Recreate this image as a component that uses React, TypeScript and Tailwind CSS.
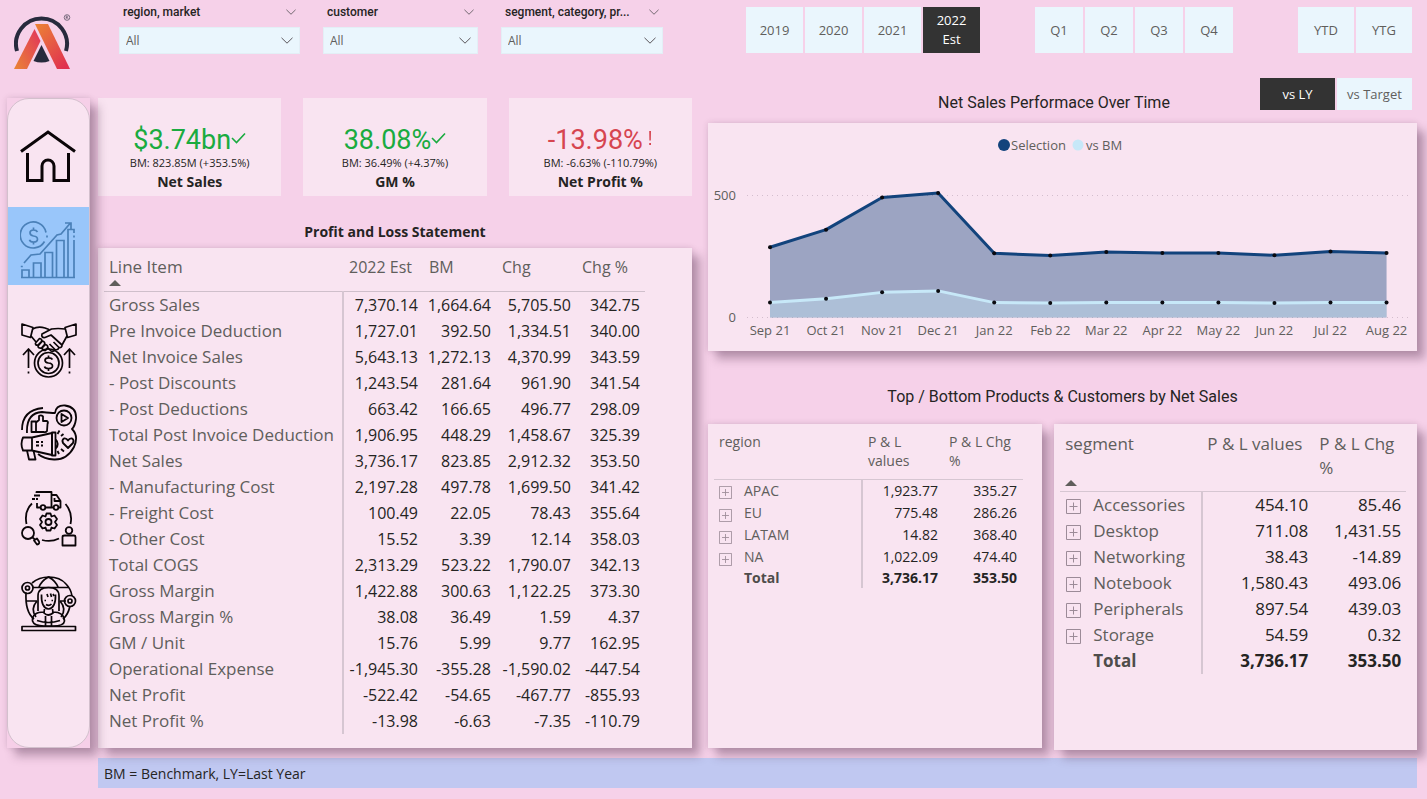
import React from "react";
import { useId } from "react";

const ui = "font-['Open_Sans','Noto_Sans',sans-serif]";
const din = "font-[Roboto,'Liberation_Sans',sans-serif]";
const shadow = "shadow-[0_0_6px_rgba(70,35,65,0.16),8px_8px_9px_rgba(70,35,65,0.34)]";
const panel = "bg-[#f9e4f1] " + shadow;

function Chevron({ className }: { className: string }) {
  return (
    <svg className={className} viewBox="0 0 12 7" fill="none" stroke="#5a555a" aria-hidden="true">
      <path d="M0.5 0.8 L6 6.2 L11.5 0.8" />
    </svg>
  );
}

function Logo() {
  return (
    <svg width="58" height="60" viewBox="0 0 58 60" role="img" aria-label="Logo">
      <defs>
        <linearGradient id="logoLeft" x1="0" y1="1" x2="1" y2="0.2">
          <stop offset="0" stopColor="#ea8534" />
          <stop offset="1" stopColor="#e23a58" />
        </linearGradient>
        <linearGradient id="logoRight" x1="0" y1="0" x2="0.8" y2="1">
          <stop offset="0" stopColor="#ec8433" />
          <stop offset="0.5" stopColor="#e65a45" />
          <stop offset="1" stopColor="#e0304f" />
        </linearGradient>
      </defs>
      <path d="M3 39 A25.5 25.5 0 1 1 52 39" fill="none" stroke="#272a3d" strokeWidth="4" />
      <path d="M27.5 33 L35.5 49 Q27.5 52 19.500 49 Z" fill="#272a3d" />
      <path d="M0 57 L20.500 17 L26.500 29 L13 57 Z" fill="url(#logoLeft)" />
      <path d="M21 12 H34 L56 57 H43 Z" fill="url(#logoRight)" />
      <circle cx="53" cy="5.500" r="2.800" fill="none" stroke="#4b4658" strokeWidth="0.7" />
      <path d="M52.200 7 V4 H53.300 Q54.300 4.800 53.300 5.500 H52.200 M53.300 5.500 L54.200 7" fill="none" stroke="#4b4658" strokeWidth="0.6" />
    </svg>
  );
}

function HomeIcon() {
  return (
    <svg width="58" height="54" viewBox="0 0 58 54" fill="none" stroke="#0b0508" strokeWidth="3" strokeLinecap="square">
      <path d="M1 21.500 L28 2 L55 21.500" strokeLinecap="butt" />
      <path d="M7.500 24.500 V50.500 H22 V36 A6 6 0 0 1 34 36 V50.500 H48.500 V24.500" />
    </svg>
  );
}

function GrowthIcon() {
  return (
    <svg width="58" height="60" viewBox="1 0 58 60" fill="none" stroke="#4a80b8" strokeWidth="1.7">
      <path d="M2 57.500 H56" />
      <path d="M3 57 V50 H10 V57 M14.500 57 V43 H22 V57 M26 57 V32.500 H33.500 V57 M37.500 57 V20.500 H45 V57 M49 57 V9.500 H55 V13 M55 20 V57" />
      <path d="M55 15.500 V17.500 M1.800 46.500 H3.800" />
      <path d="M5 43 L12 35 L21 34 L38 15 L42 14 L51 3.500 M46 3 H52 V9" />
      <path d="M25.500 21.500 A13 13 0 1 1 27 12.500" />
      <path d="M18.500 12 Q17.500 10 14.500 10 Q11 10 11 12.800 Q11 15.500 14.500 16 Q18.500 16.300 18.500 19.200 Q18.500 22 14.500 22 Q11 22 10.500 19.800 M14.500 7.500 V10 M14.500 22 V24.500" />
      <path d="M28 15.500 V17.500" />
    </svg>
  );
}

function DealIcon() {
  return (
    <svg width="58" height="58" viewBox="0 0 58 58" fill="none" stroke="#0b0508" strokeWidth="1.700" strokeLinejoin="round">
      <path d="M2 3 L13 6.500 L10.500 16.500 L2 14 Z M56 3 L45 6.500 L47.500 16.500 L56 14 Z" />
      <path d="M12.500 8 Q18 5 25 7 L29 8.500 M45 8 Q38 7 31.500 8 L22 13 Q21 17 25 16.500 L31 14 L42 24" />
      <path d="M11 15 L16 21 M47 15 L42 24 Q42 27 39 26.500 M39 26.500 L33.500 21 M39 26.500 Q38 29.500 35 28.500 M35 28.500 L29.500 23 M35 28.500 Q34 31 31 30 L27.500 26.500" />
      <path d="M15.500 22 L19.500 17.500 Q22.500 18 21.500 20.500 L18 24 Q15 24.500 15.500 22 M18 25 L22.500 20 Q25.500 21 24.500 23.500 L21.500 27 Q18 27.500 18 25 M22 27 L25.500 23.500 Q28.500 24.500 27.500 27 L25.500 29.500 Q22.500 29.500 22 27" />
      <circle cx="28.500" cy="42" r="14" />
      <circle cx="28.500" cy="42" r="10.500" />
      <path d="M32.500 38.500 Q31.500 36.800 28.500 36.800 Q25 36.800 25 39.300 Q25 41.600 28.500 42 Q32.500 42.300 32.500 45 Q32.500 47.500 28.500 47.500 Q25 47.500 24.500 45.500 M28.500 34.500 V36.800 M28.500 47.500 V50" />
      <path d="M8.500 47 V28 M3 34 L8.500 28 L14 34 M49.500 47 V28 M44 34 L49.500 28 L55 34 M8.500 50.500 V52.500 M49.500 50.500 V52.500" />
    </svg>
  );
}

function MarketingIcon() {
  return (
    <svg width="58" height="58" viewBox="0 0 58 58" fill="none" stroke="#0b0508" strokeWidth="1.800" strokeLinejoin="round">
      <path d="M2 26 Q2 6 23 4" />
      <path d="M7 29 Q6 9 22 8 Q31 9 35 9 Q36 1 45 1.500 Q57 3 56 15 Q55 22 52 25 Q59 32 54 43 Q47 56 34 55.500 Q24 55 18 50" />
      <circle cx="44" cy="14" r="7.500" />
      <path d="M41.500 10 L48 14 L41.500 18 Z" />
      <path d="M11.500 17.500 H16 V28 H11.500 Z M16 18.500 L19 16 V12 Q21 10.500 23 12.500 V17 H27 Q28.500 18 27.500 20 L27 27 Q26 28.500 24 28 H16" />
      <path d="M3 33.500 H12 V46.500 H3 Q0 40 3 33.500 Z M12 33.500 L32 29 V51 L12 46.500 M16 38 H19 M16 41.500 H19 M21 38 H23 M21 41.500 H23" />
      <path d="M32 28.500 H35.500 V51.500 H32 Z M35.500 35 Q40 40 35.500 45 M7 46.500 L9 55.500 H15.500 L13.500 46.500" />
      <path d="M48 44 L43 39 Q41.500 36 44 34.500 Q46.500 34 48 36.500 Q49.500 34 52 34.500 Q54.500 36 53 39 Z" />
      <path d="M37.500 30 L39.500 26.500 M41 32 L43.500 30 M37.500 47 L39 50 M41 45 L44 47.500" />
    </svg>
  );
}

function SupplyIcon() {
  return (
    <svg width="58" height="58" viewBox="0 0 58 58" fill="none" stroke="#0b0508" strokeWidth="1.800" strokeLinejoin="round">
      <path d="M16.500 3 V2 H31.500 V17.500 H26 M20 17.500 H17 V13 M31.500 5 H36.500 L40.500 11 V17.500 H38 M32 17.500 H34 M34.500 8 V11 H40 M14 5.500 H20 M12 9 H15 M16 9 H18" />
      <circle cx="23" cy="17.500" r="2.300" />
      <circle cx="36" cy="17.500" r="2.300" />
      <path d="M12 13.500 Q4 21 6.500 34 M45.500 14 Q53 23 50.500 34 M22 50 Q31 52.500 39 48.500" />
      <circle cx="28.500" cy="32" r="3" />
      <path d="M26.500 23.500 H30.500 L31.500 26.500 L34.500 25.500 L37 29 L35 32 L37 35 L34.500 38.500 L31.500 37.500 L30.500 40.500 H26.500 L25.500 37.500 L22.500 38.500 L20 35 L22 32 L20 29 L22.500 25.500 L25.500 26.500 Z" />
      <circle cx="8" cy="43" r="6" />
      <path d="M12.500 47.500 L15 49.500 M14 50.500 L17 48.500 L19 51.500 Q20 54 17 54.500 Z" />
      <circle cx="49" cy="40.500" r="3.300" />
      <path d="M42.500 55.500 V47 Q42.500 45.500 44.500 45.500 H54 Q55.500 45.500 55.500 47 V55.500 Z" />
    </svg>
  );
}

function ExecutiveIcon() {
  return (
    <svg width="58" height="58" viewBox="0 0 58 58" fill="none" stroke="#0b0508" strokeWidth="1.700" strokeLinejoin="round">
      <path d="M12 8 Q19 2 29 2 Q40 2 46 9 Q51 14 52 21 M6 17.500 Q5 37 14 44 M50 31 Q48 40 43 44 M13 12.500 H49 M6 26 H17 M40 26 H46 M28.500 2 Q21 6 18.500 13 M28.500 2 Q36 6 38.500 13 M17 26 Q10 34 16 42 M40 26 Q47 34 41 42" />
      <circle cx="7.500" cy="13" r="5.500" />
      <circle cx="7.500" cy="13" r="2" />
      <circle cx="50" cy="26" r="5.500" />
      <circle cx="50" cy="26" r="2" />
      <path d="M18 36 V21 Q18 12.500 28.500 12.500 Q39 12.500 39 21 V36 M21.500 19.500 Q21 33 28.500 34 Q36 33 35.500 19.500 M27 19 L28 22 M30.500 18.500 L31.500 22 M34 21 L33 19" />
      <path d="M24.500 25.500 H26 M31.500 25.500 H33 M26 29.500 Q29 31.500 31.500 29" />
      <path d="M24.500 34 L24 38 Q28 42 33 38 L32.500 34 M24 37 Q12 37 12.500 46 Q14 51 24 51 H33 Q44 51 44.500 46 Q44 37 33 37 M17 45.500 Q23 47.500 28.500 47.500 Q34 47.500 40 45.500 M25.500 41 V51 M31.500 41 V51" />
      <path d="M2 51.500 H55.500 V55.500 H2 Z" />
    </svg>
  );
}

function Filter({ label, width }: { label: string; width: string }) {
  const id = useId();
  return (
    <div className={"relative " + width}>
      <div className="flex h-[27px] items-center justify-between pr-1 pb-1 pl-1">
        <label htmlFor={id} className={din + " text-[12px] font-medium text-[#252423]"}>
          {label}
        </label>
        <Chevron className="h-[6px] w-[10px]" />
      </div>
      <select
        id={id}
        className="block h-[27px] w-full appearance-none border border-[#e3eff6] bg-[#eaf6fd] px-[6px] text-[12px] text-[#605e5c]"
      >
        <option>All</option>
      </select>
      <Chevron className="pointer-events-none absolute right-[7px] bottom-[10px] h-[7px] w-[12px]" />
    </div>
  );
}

function Segment({ items, active, size }: { items: string[]; active?: string; size: string }) {
  return (
    <div className="flex gap-[2px]">
      {items.map((item) => (
        <button
          key={item}
          type="button"
          aria-pressed={item === active}
          className={
            size +
            " text-[13px] leading-[19px] " +
            (item === active ? "bg-[#333333] text-white" : "bg-[#eaf6fd] text-[#605e5c]")
          }
        >
          {item}
        </button>
      ))}
    </div>
  );
}

interface KpiProps {
  value: string;
  good: boolean;
  bench: string;
  label: string;
}

function Kpi({ value, good, bench, label }: KpiProps) {
  return (
    <section className="flex h-[98px] flex-1 flex-col items-center bg-[#f9e4f1] pt-[27px]">
      <div className={"flex items-center " + (good ? "text-[#1aab40]" : "text-[#d64550]")}>
        <span className={din + " text-[27px] leading-[30px]"}>{value}</span>
        {good ? (
          <svg className="mb-1 h-[12px] w-[15px]" viewBox="0 0 15 12" fill="none" stroke="currentColor" strokeWidth="1.600">
            <path d="M1 6 L5.500 10.500 L14 1.500" />
          </svg>
        ) : (
          <svg className="mb-1 ml-1 h-[16px] w-[6px]" viewBox="0 0 6 16" fill="currentColor">
            <path d="M2.200 1 H4 L3.800 10.500 H2.400 Z M2.200 13 H4 V15 H2.200 Z" />
          </svg>
        )}
      </div>
      <p className="text-[11px] leading-[15px] text-[#252423]">{bench}</p>
      <h2 className="mt-[2px] text-[14px] leading-[19px] font-bold text-[#252423]">{label}</h2>
    </section>
  );
}

const statement: string[][] = [
  ["Gross Sales", "7,370.14", "1,664.64", "5,705.50", "342.75"],
  ["Pre Invoice Deduction", "1,727.01", "392.50", "1,334.51", "340.00"],
  ["Net Invoice Sales", "5,643.13", "1,272.13", "4,370.99", "343.59"],
  ["- Post Discounts", "1,243.54", "281.64", "961.90", "341.54"],
  ["- Post Deductions", "663.42", "166.65", "496.77", "298.09"],
  ["Total Post Invoice Deduction", "1,906.95", "448.29", "1,458.67", "325.39"],
  ["Net Sales", "3,736.17", "823.85", "2,912.32", "353.50"],
  ["- Manufacturing Cost", "2,197.28", "497.78", "1,699.50", "341.42"],
  ["- Freight Cost", "100.49", "22.05", "78.43", "355.64"],
  ["- Other Cost", "15.52", "3.39", "12.14", "358.03"],
  ["Total COGS", "2,313.29", "523.22", "1,790.07", "342.13"],
  ["Gross Margin", "1,422.88", "300.63", "1,122.25", "373.30"],
  ["Gross Margin %", "38.08", "36.49", "1.59", "4.37"],
  ["GM / Unit", "15.76", "5.99", "9.77", "162.95"],
  ["Operational Expense", "-1,945.30", "-355.28", "-1,590.02", "-447.54"],
  ["Net Profit", "-522.42", "-54.65", "-467.77", "-855.93"],
  ["Net Profit %", "-13.98", "-6.63", "-7.35", "-110.79"],
];

function SortMark() {
  return (
    <svg className="h-[6px] w-[12px]" viewBox="0 0 12 6" fill="#605e5c" aria-hidden="true">
      <path d="M0 6 L6 0 L12 6 Z" />
    </svg>
  );
}

function StatementTable() {
  return (
    <table className="w-[541px] table-fixed border-collapse text-[17px] text-[#252423]">
      <colgroup>
        <col className="w-[239px]" />
        <col className="w-[80px]" />
        <col className="w-[73px]" />
        <col className="w-[80px]" />
        <col className="w-[69px]" />
      </colgroup>
      <thead>
        <tr className="h-[37px] border-b border-[#cfbfcb] align-top leading-[26px] text-[#605e5c]">
          <th className="pl-[5px] text-left font-normal">
            <span className="block h-[26px]">Line Item</span>
            <SortMark />
          </th>
          <th className="pl-[6px] text-left text-[16px] font-normal whitespace-nowrap">2022 Est</th>
          <th className="pl-[6px] text-left text-[16px] font-normal">BM</th>
          <th className="pl-[6px] text-left text-[16px] font-normal">Chg</th>
          <th className="pl-[6px] text-left text-[16px] font-normal whitespace-nowrap">Chg %</th>
        </tr>
      </thead>
      <tbody>
        {statement.map((row) => (
          <tr key={row[0]} className="h-[26px] leading-[26px]">
            <th scope="row" className="border-r-2 border-[#d6c6d2] pl-[5px] text-left font-normal whitespace-nowrap text-[#605e5c]">
              {row[0]}
            </th>
            {row.slice(1).map((cell, i) => (
              <td key={i} className="pr-[5px] text-right text-[16px] whitespace-nowrap">
                {cell}
              </td>
            ))}
          </tr>
        ))}
      </tbody>
    </table>
  );
}

const months = ["Sep 21", "Oct 21", "Nov 21", "Dec 21", "Jan 22", "Feb 22", "Mar 22", "Apr 22", "May 22", "Jun 22", "Jul 22", "Aug 22"];
const selection = [288, 360, 492, 510, 263, 254, 268, 264, 264, 255, 270, 264];
const benchmark = [61, 77, 103, 109, 61, 59, 61, 61, 61, 59, 61, 61];

const px = (i: number) => 62 + i * 56.05;
const py = (v: number) => 194.5 - v * 0.244;
const line = (data: number[]) => data.map((v, i) => `${px(i)},${py(v)}`).join(" ");
const area = (data: number[]) => `${px(0)},194.500 ${line(data)} ${px(11)},194.500`;

function SalesChart() {
  return (
    <svg className="block w-full" viewBox="0 0 709 228" role="img" aria-label="Net sales over time">
      <circle cx="296" cy="22" r="6" fill="#12437c" />
      <circle cx="370" cy="22" r="5.500" fill="#c7e8f8" />
      <g fill="#605e5c" fontSize="13">
        <text x="303" y="27">Selection</text>
        <text x="378" y="27">vs BM</text>
        <text x="28" y="77" textAnchor="end">500</text>
        <text x="28" y="199" textAnchor="end">0</text>
        {months.map((m, i) => (
          <text key={m} x={px(i)} y="212" textAnchor="middle">{m}</text>
        ))}
      </g>
      <path d="M39 72.500 H702 M39 194.500 H702" stroke="#d3bdcd" strokeDasharray="1 4" />
      <polygon points={area(selection)} fill="#12437c" fillOpacity="0.4" />
      <polygon points={area(benchmark)} fill="#c7e8f8" fillOpacity="0.4" />
      <polyline points={line(selection)} fill="none" stroke="#12437c" strokeWidth="3" strokeLinejoin="round" />
      <polyline points={line(benchmark)} fill="none" stroke="#c7e8f8" strokeWidth="3" strokeLinejoin="round" />
      {[selection, benchmark].map((data, s) =>
        data.map((v, i) => <circle key={s + "-" + i} cx={px(i)} cy={py(v)} r="2" fill="#0a0a0f" />)
      )}
    </svg>
  );
}

function Expand({ name, className }: { name: string; className: string }) {
  return (
    <button type="button" aria-label={"Expand " + name} className={"block " + className}>
      <svg className="h-full w-full" viewBox="0 0 15 15" fill="none" stroke="#9c8b98">
        <path d="M0.500 0.500 H14.500 V14.500 H0.500 Z M3.500 7.500 H11.500 M7.500 3.500 V11.500" />
      </svg>
    </button>
  );
}

const regions: string[][] = [
  ["APAC", "1,923.77", "335.27"],
  ["EU", "775.48", "286.26"],
  ["LATAM", "14.82", "368.40"],
  ["NA", "1,022.09", "474.40"],
];

const segments: string[][] = [
  ["Accessories", "454.10", "85.46"],
  ["Desktop", "711.08", "1,431.55"],
  ["Networking", "38.43", "-14.89"],
  ["Notebook", "1,580.43", "493.06"],
  ["Peripherals", "897.54", "439.03"],
  ["Storage", "54.59", "0.32"],
];

function RegionTable() {
  return (
    <table className="w-[309px] table-fixed border-collapse text-[14px] text-[#252423]">
      <colgroup>
        <col className="w-[148px]" />
        <col className="w-[81px]" />
        <col className="w-[80px]" />
      </colgroup>
      <thead>
        <tr className="h-[47px] border-b border-[#d6c6d2] align-top leading-[19px] text-[#605e5c]">
          <th className="pl-[5px] text-left font-normal">region</th>
          <th className="pr-4 pl-[6px] text-left font-normal">P &amp; L values</th>
          <th className="pl-[6px] text-left font-normal">P &amp; L Chg %</th>
        </tr>
      </thead>
      <tbody>
        {regions.map((r, i) => (
          <tr key={r[0]} className={"leading-[20px] " + (i === 0 ? "h-[23px]" : "h-[22px]")}>
            <th scope="row" className="border-r-2 border-[#d6c6d2] pl-[5px] font-normal text-[#605e5c]">
              <span className="flex items-center gap-3">
                <Expand name={r[0]} className="mt-1 h-[13px] w-[13px]" />
                {r[0]}
              </span>
            </th>
            <td className="pr-[5px] text-right">{r[1]}</td>
            <td className="pr-[6px] text-right">{r[2]}</td>
          </tr>
        ))}
        <tr className="h-[20px] leading-[20px] font-bold">
          <th scope="row" className="border-r-2 border-[#d6c6d2] pl-[30px] text-left font-bold text-[#4f4d4b]">Total</th>
          <td className="pr-[5px] text-right">3,736.17</td>
          <td className="pr-[6px] text-right">353.50</td>
        </tr>
      </tbody>
    </table>
  );
}

function SegmentTable() {
  return (
    <table className="w-[346px] table-fixed border-collapse text-[17px] text-[#252423]">
      <colgroup>
        <col className="w-[142px]" />
        <col className="w-[111px]" />
        <col className="w-[93px]" />
      </colgroup>
      <thead>
        <tr className="h-[59px] border-b border-[#d6c6d2] align-top leading-[24px] text-[#605e5c]">
          <th className="pl-[5px] text-left font-normal">
            <span className="block h-[48px]">segment</span>
            <SortMark />
          </th>
          <th className="pl-[5px] text-left font-normal whitespace-nowrap">P &amp; L values</th>
          <th className="pl-[6px] text-left font-normal">P &amp; L Chg %</th>
        </tr>
      </thead>
      <tbody>
        {segments.map((r) => (
          <tr key={r[0]} className="h-[26px] leading-[26px]">
            <th scope="row" className="border-r-2 border-[#d6c6d2] pl-[6px] font-normal text-[#605e5c]">
              <span className="flex items-center gap-3">
                <Expand name={r[0]} className="mt-1 h-[15px] w-[15px]" />
                {r[0]}
              </span>
            </th>
            <td className="pr-[5px] text-right">{r[1]}</td>
            <td className="pr-[5px] text-right">{r[2]}</td>
          </tr>
        ))}
        <tr className="h-[26px] leading-[26px] font-bold">
          <th scope="row" className="border-r-2 border-[#d6c6d2] pl-[33px] text-left font-bold text-[#4f4d4b]">Total</th>
          <td className="pr-[5px] text-right">3,736.17</td>
          <td className="pr-[5px] text-right">353.50</td>
        </tr>
      </tbody>
    </table>
  );
}

const navItems = [
  { name: "Home", icon: <HomeIcon />, style: "h-[78px] mt-[19px]" },
  { name: "Finance", icon: <GrowthIcon />, style: "h-[78px] mt-[11px] pt-2 bg-[#99c6fa]" },
  { name: "Sales", icon: <DealIcon />, style: "h-[78px] mt-[26px]" },
  { name: "Marketing", icon: <MarketingIcon />, style: "h-[78px] mt-[5px]" },
  { name: "Supply chain", icon: <SupplyIcon />, style: "h-[78px] mt-[8px]" },
  { name: "Executive", icon: <ExecutiveIcon />, style: "h-[78px] mt-[7px]" },
];

export default function App() {
  return (
    <div className={ui + " flex min-h-screen bg-[#f6d1e9] pr-[10px] pl-[7px]"}>
      <aside className="relative z-10 flex w-[83px] shrink-0 flex-col">
        <div className="h-[98px] pt-3 pl-[7px]">
          <Logo />
        </div>
        <div className={"bg-[#f6cfe8] " + shadow}>
          <nav className="flex h-[650px] flex-col rounded-[22px] border border-[#d3c0cd] bg-[#f9e4f1]">
            {navItems.map((item) => (
              <a
                key={item.name}
                href={"#" + item.name}
                aria-label={item.name}
                className={"flex shrink-0 items-center justify-center " + item.style}
              >
                {item.icon}
              </a>
            ))}
          </nav>
        </div>
      </aside>

      <div className="ml-2 flex min-w-0 flex-1 flex-col">
        <div className="relative flex gap-4">
          <main className="flex min-w-0 flex-[594] flex-col">
            <div className="flex h-[98px] items-start gap-[23px] pl-[21px]">
              <Filter label="region, market" width="w-[181px]" />
              <Filter label="customer" width="w-[155px]" />
              <Filter label="segment, category, pr..." width="w-[162px]" />
            </div>
            <div className="flex gap-[22px]">
              <Kpi value="$3.74bn" good bench="BM: 823.85M (+353.5%)" label="Net Sales" />
              <Kpi value="38.08%" good bench="BM: 36.49% (+4.37%)" label="GM %" />
              <Kpi value="-13.98%" good={false} bench="BM: -6.63% (-110.79%)" label="Net Profit %" />
            </div>
            <h2 className="flex h-[52px] items-end justify-center pb-[6px] text-[14px] font-bold text-[#252423]">
              Profit and Loss Statement
            </h2>
            <section className={panel + " h-[500px] pt-[6px] pl-[6px]"}>
              <StatementTable />
            </section>
          </main>

          <div className="flex min-w-0 flex-[709] flex-col">
            <div className="flex pt-[7px] pr-[5px] pl-[38px]">
              <Segment items={["2019", "2020", "2021", "2022 Est"]} active="2022 Est" size="h-[46px] w-[57px] px-2" />
              <div className="ml-[55px]">
                <Segment items={["Q1", "Q2", "Q3", "Q4"]} size="h-[46px] w-[48px]" />
              </div>
              <div className="ml-auto">
                <Segment items={["YTD", "YTG"]} size="h-[46px] w-[56px]" />
              </div>
            </div>
            <div className="grid h-[70px] grid-cols-[1fr_auto_1fr] pt-[25px] pr-[5px]">
              <h2 className={din + " col-start-2 pt-[15px] pr-3 text-[16px] leading-[20px] text-[#252423]"}>
                Net Sales Performace Over Time
              </h2>
              <div className="justify-self-end">
                <Segment items={["vs LY", "vs Target"]} active="vs LY" size="h-[32px] w-[75px]" />
              </div>
            </div>
            <section className={panel}>
              <SalesChart />
            </section>
            <h2 className={din + " flex h-[73px] items-center justify-center pt-[18px] text-[16px] text-[#252423]"}>
              Top / Bottom Products &amp; Customers by Net Sales
            </h2>
            <div className="flex items-start gap-3">
              <section className={panel + " h-[324px] min-w-0 flex-[334] pt-[8px] pl-[6px]"}>
                <RegionTable />
              </section>
              <section className={panel + " h-[326px] min-w-0 flex-[363] pt-[8px] pl-[6px]"}>
                <SegmentTable />
              </section>
            </div>
          </div>
        </div>
        <footer className="mt-[8px] flex h-[30px] items-center bg-[#c0c8f1] px-[6px] text-[14px] text-[#252423]">
          BM = Benchmark, LY=Last Year
        </footer>
      </div>
    </div>
  );
}
